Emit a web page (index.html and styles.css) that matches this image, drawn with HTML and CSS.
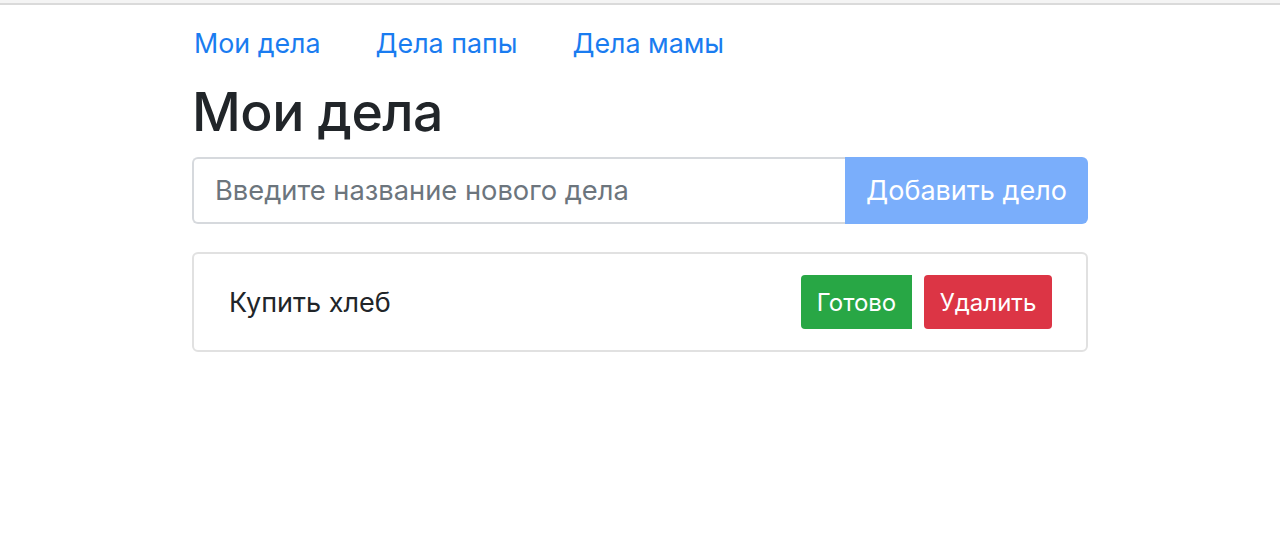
FILE: index.html
```html
<!DOCTYPE html>
<html lang="ru">
<head>
<meta charset="utf-8">
<title>Мои дела</title>
<link rel="stylesheet" href="styles.css">
</head>
<body>
<div class="topline"></div>
<div class="container">
  <nav class="nav">
    <a href="#" class="nav-link">Мои дела</a>
    <a href="#" class="nav-link">Дела папы</a>
    <a href="#" class="nav-link">Дела мамы</a>
  </nav>
  <h1 class="title">Мои дела</h1>
  <form class="input-group">
    <input class="form-control" type="text" placeholder="Введите название нового дела">
    <button class="btn-add" type="button" disabled>Добавить дело</button>
  </form>
  <div class="card">
    <span class="task">Купить хлеб</span>
    <div class="actions">
      <button class="btn btn-done" type="button">Готово</button>
      <button class="btn btn-del" type="button">Удалить</button>
    </div>
  </div>
</div>
</body>
</html>
```

FILE: styles.css
```css
* { box-sizing: border-box; }
html, body { margin: 0; padding: 0; background: #fff; }
body {
  font-family: "Inter", "Liberation Sans", sans-serif;
  color: #212529;
}
.topline {
  height: 5px;
  background: #f4f4f4;
  border-bottom: 2px solid #dadada;
}
.container {
  width: 896px;
  margin: 0 auto;
}
.nav {
  display: flex;
  gap: 55px;
  padding: 22px 0 0 2px;
  height: 66px;
}
.nav-link {
  color: #1a7cf0;
  text-decoration: none;
  font-size: 26.8px;
  line-height: 32px;
}
.title {
  margin: 9px 0 0 0;
  font-size: 53.5px;
  font-weight: 500;
  line-height: 64px;
  letter-spacing: -0.5px;
}
.input-group {
  display: flex;
  margin-top: 13px;
  height: 67px;
}
.form-control {
  flex: 1;
  border: 2px solid #d6d9dd;
  border-right: none;
  border-radius: 6px 0 0 6px;
  padding: 0 21px;
  font-family: inherit;
  font-size: 27.3px;
  color: #495057;
  outline: none;
}
.form-control::placeholder { color: #6c757d; }
.btn-add {
  width: 243px;
  border: none;
  border-radius: 0 6px 6px 0;
  background: #7aaefb;
  color: #fff;
  font-family: inherit;
  font-size: 27px;
  padding: 0;
}
.card {
  margin-top: 28px;
  height: 100px;
  border: 2px solid #e1e1e1;
  border-radius: 6px;
  display: flex;
  align-items: center;
  justify-content: space-between;
  padding: 0 34px 0 35px;
}
.task {
  font-size: 27px;
  color: #212529;
}
.actions {
  display: flex;
  gap: 12px;
}
.btn {
  height: 54px;
  border: none;
  color: #fff;
  font-family: inherit;
  font-size: 24px;
  padding: 0;
}
.btn-done {
  width: 111px;
  background: #28a745;
  border-radius: 4px 0 0 4px;
}
.btn-del {
  width: 128px;
  background: #dc3545;
  border-radius: 4px;
}
```
